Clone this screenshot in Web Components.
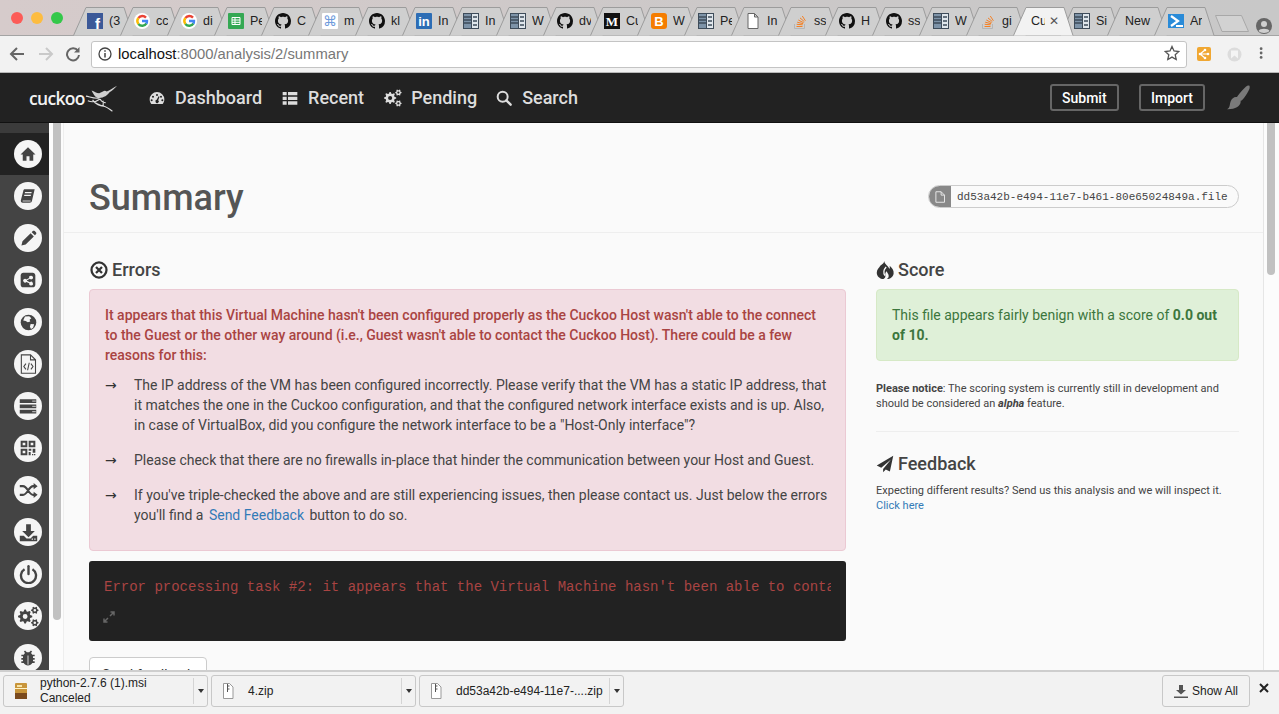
<!DOCTYPE html>
<html>
<head>
<meta charset="utf-8">
<title>Cuckoo</title>
<style>
  html, body { margin: 0; height: 100%; overflow: hidden; }
  body { display: flex; flex-direction: column; height: 714px; font-family: Roboto, "Liberation Sans", sans-serif; background: #fafafa; }
</style>
</head>
<body>
  <browser-tabs></browser-tabs>
  <browser-toolbar></browser-toolbar>
  <cuckoo-nav></cuckoo-nav>
  <page-frame>
    <summary-header></summary-header>
    <errors-panel slot="main"></errors-panel>
    <score-panel slot="side"></score-panel>
  </page-frame>
  <download-shelf></download-shelf>

<script>
function svg(size, box, body, extra = '') {
  return `<svg width="${size}" height="${size}" viewBox="0 0 ${box} ${box}" ${extra}>${body}</svg>`;
}

function gear(cx, cy, r, n = 8) {
  let d = '';
  const step = Math.PI * 2 / (n * 4);
  for (let i = 0; i < n * 4; i++) {
    const rad = (i % 4 === 0 || i % 4 === 1) ? r : r * 0.74;
    const a = i * step - step / 2;
    d += (i ? 'L' : 'M') + (cx + rad * Math.cos(a)).toFixed(2) + ' ' + (cy + rad * Math.sin(a)).toFixed(2);
  }
  d += 'Z';
  const h = r * 0.34;
  d += `M${cx - h} ${cy}a${h} ${h} 0 1 0 ${h * 2} 0a${h} ${h} 0 1 0 ${-h * 2} 0Z`;
  return `<path fill-rule="evenodd" d="${d}"/>`;
}

const cogs = gear(8.5, 12.5, 8.5) + gear(20, 5, 4.5, 6) + gear(20, 20, 4.5, 6);

const octocat = 'M8 0C3.58 0 0 3.58 0 8c0 3.54 2.29 6.53 5.47 7.59.4.07.55-.17.55-.38 0-.19-.01-.82-.01-1.49-2.01.37-2.53-.49-2.69-.94-.09-.23-.48-.94-.82-1.13-.28-.15-.68-.52-.01-.53.63-.01 1.08.58 1.23.82.72 1.21 1.87.87 2.33.66.07-.52.28-.87.51-1.07-1.78-.2-3.64-.89-3.64-3.95 0-.87.31-1.59.82-2.15-.08-.2-.36-1.02.08-2.12 0 0 .67-.21 2.2.82.64-.18 1.32-.27 2-.27.68 0 1.36.09 2 .27 1.53-1.04 2.2-.82 2.2-.82.44 1.1.16 1.92.08 2.12.51.56.82 1.27.82 2.15 0 3.07-1.87 3.75-3.65 3.95.29.25.54.73.54 1.48 0 1.07-.01 1.93-.01 2.2 0 .21.15.46.55.38A8.013 8.013 0 0016 8c0-4.42-3.58-8-8-8z';

const favicons = {
  fb: `<rect width="16" height="16" fill="#3b5998"/><text x="8" y="15.5" font-size="15" font-weight="700" fill="#fff" font-family="Liberation Sans">f</text>`,
  google: `<circle cx="8" cy="8" r="8" fill="#fff"/><g fill="none" stroke-width="2.4"><path d="M12 4.6A5 5 0 0 0 4.4 5" stroke="#ea4335"/><path d="M4.4 5a5 5 0 0 0 0 6" stroke="#fbbc05"/><path d="M4.4 11a5 5 0 0 0 8.1-.6" stroke="#34a853"/><path d="M8 8h5a5 5 0 0 1-.6 2.6" stroke="#4285f4"/></g>`,
  sheets: `<rect width="16" height="16" rx="1" fill="#34a853"/><path d="M4 4.5h8v7H4zM4 7h8M4 9.3h8M7 4.5v7" fill="none" stroke="#fff" stroke-width="1"/>`,
  github: `<path d="${octocat}" fill="#111"/>`,
  cmd: `<rect width="16" height="16" rx="1" fill="#fff"/><text x="8" y="13" font-size="14" text-anchor="middle" fill="#6f9bdc" font-family="DejaVu Sans">⌘</text>`,
  linkedin: `<rect width="16" height="16" rx="1" fill="#2d6db5"/><text x="8" y="13" font-size="13" font-weight="700" text-anchor="middle" fill="#fff" font-family="Liberation Sans">in</text>`,
  panel: `<rect x=".5" y=".5" width="15" height="15" fill="#7d93a8" stroke="#3e4c5a"/><path d="M9 1h6v14H9z" fill="#dfe6ec"/><path d="M1 4h7M1 7h7M1 10h7M10 4h4M10 8h4M10 12h4" stroke="#3e4c5a" stroke-width="1.3"/><path d="M8.5 1v14" stroke="#3e4c5a"/>`,
  medium: `<rect width="16" height="16" fill="#111"/><text x="8" y="13" font-size="13" font-weight="700" text-anchor="middle" fill="#fff" font-family="Liberation Serif">M</text>`,
  blogger: `<rect width="16" height="16" rx="3" fill="#f57d00"/><text x="8" y="13" font-size="13" font-weight="700" text-anchor="middle" fill="#fff" font-family="Liberation Sans">B</text>`,
  doc: `<path d="M3 .5h6.5L13 4v11.5H3z M9.5 .5V4H13" fill="#fff" stroke="#666"/>`,
  stack: `<path d="M2.5 11v4.5h10V11" fill="none" stroke="#b5b5b5" stroke-width="1"/><path d="M4.5 13.5h6M4.7 11.3l6 .5M5.2 9.2l5.9 1.5M6.3 7l5.3 2.700M8 4.900l4.300 3.700M10.300 3l3.100 4.800" stroke="#f48024" stroke-width="1" fill="none"/>`,
  azure: `<path d="M0 1h16v14H0z" fill="#2a8bd8"/><path d="M3 3l7 5-7 5M8 13h7" fill="none" stroke="#fff" stroke-width="2.2"/>`
};

const railIcons = {
  home: svg(18, 24, `<path d="M10 21v-6h4v6h5v-8.5h3L12 3 2 12.5h3V21z"/>`),
  book: svg(16, 24, `<path d="M7 2h15l-4 17c-.3 1.5-1.5 3-3.5 3H4c-2 0-3-1.5-2.7-3.5L5 4c.2-1 1-2 2-2zm.5 4l-.4 2h10l.4-2zm-1 4l-.4 2h10l.4-2z" fill-rule="evenodd"/><path d="M4 19.5h12" stroke="#f5f5f5" stroke-width="1.2"/>`),
  pencil: svg(17, 24, `<path d="M2 22l1.5-6L15 4.5l4.5 4.5L8 20.5zM16.5 3L18 1.5c.8-.8 2-.8 2.8 0l1.7 1.7c.8.8.8 2 0 2.8L21 7.5z"/>`),
  share: svg(16, 24, `<path fill-rule="evenodd" d="M5 1h14c2.2 0 4 1.8 4 4v14c0 2.2-1.800 4-4 4H5c-2.2 0-4-1.8-4-4V5c0-2.2 1.8-4 4-4zm11.5 4.5a2.8 2.8 0 0 0-2.7 3.5l-4.2 2.1a2.8 2.8 0 1 0 0 3.8l4.2 2.1a2.8 2.8 0 1 0 1-1.7l-4.3-2.2a3 3 0 0 0 0-.6l4.3-2.2a2.8 2.8 0 1 0 1.7-4.8z"/>`),
  globe: svg(17, 24, `<circle cx="12" cy="12" r="11"/><path d="M7 3.5l6-.5 3 3-2.5 2 1 2.5-3.5 1-3-1.5-3.5-1zM15 14l5 .5-1.5 5-3 1.5-1.5-3z" fill="#f5f5f5"/>`),
  file: svg(20, 24, `<path d="M4 1h11l6 6v16H4z M15 1v6h6" fill="none" stroke="#444" stroke-width="1.3"/><path d="M9.5 11.5L7 15l2.5 3.5M15.5 11.5L18 15l-2.5 3.5M13.5 10.5l-2 9" fill="none" stroke="#444" stroke-width="1.3"/>`),
  server: svg(18, 24, `<path fill-rule="evenodd" d="M1 3h22v5H1zm17 1.7v1.6h1.5V4.7zm2.5 0v1.6H22V4.7zM1 10h22v5H1zm17 1.7v1.6h1.5v-1.6zm2.5 0v1.6H22v-1.6zM1 17h22v5H1zm17 1.7v1.6h1.5v-1.6zm2.5 0v1.6H22v-1.6z"/>`),
  qr: svg(16, 24, `<path fill-rule="evenodd" d="M1 1h10v10H1zm3 3v4h4V4zM13 1h10v10H13zm3 3v4h4V4zM1 13h10v10H1zm3 3v4h4v-4zM13 13h4v3h-4zM19 13h4v6h-4zM13 18h3v5h-3zM18 21h2v2h-2zM21 21h2v2h-2z"/>`),
  shuffle: svg(19, 24, `<path d="M1 6.5h4c6 0 7 11 13 11h1M1 17.5h4c6 0 7-11 13-11h1" fill="none" stroke="#444" stroke-width="2.6"/><path d="M18.5 2.5l5 4-5 4zM18.5 13.5l5 4-5 4z"/>`),
  download: svg(19, 24, `<path fill-rule="evenodd" d="M9 1.5h6V10h5l-8 8-8-8h5zM1 16h5l3.5 3.5h5L18 16h5v7H1zm15 3.7v1.6h1.6v-1.6zm3.3 0v1.6h1.6v-1.6z"/>`),
  power: svg(19, 24, `<path d="M7 5.3a9.5 9.5 0 1 0 10 0" fill="none" stroke="#444" stroke-width="3"/><path d="M12 1.5v10" stroke="#444" stroke-width="3" stroke-linecap="round"/>`),
  cogs: svg(21, 25, cogs),
  bug: svg(20, 24, `<path d="M20 8h-2.810c-.45-.78-1.070-1.450-1.820-1.960L17 4.410 15.590 3l-2.170 2.170C12.960 5.060 12.490 5 12 5c-.49 0-.96.06-1.410.17L8.410 3 7 4.410l1.620 1.630C7.880 6.550 7.260 7.220 6.810 8H4v2h2.090c-.05.33-.09.66-.09 1v1H4v2h2v1c0 .34.04.67.09 1H4v2h2.810c1.040 1.790 2.970 3 5.190 3s4.150-1.210 5.190-3H20v-2h-2.090c.05-.33.09-.66.09-1v-1h2v-2h-2v-1c0-.34-.04-.67-.09-1H20V8z"/><path d="M12 9v11" stroke="#f5f5f5"/>`)
};

const TAB_LIST = [
  ['fb', '(3'], ['google', 'cc'], ['google', 'di'], ['sheets', 'Pe'], ['github', 'C'], ['cmd', 'm'],
  ['github', 'kl'], ['linkedin', 'In'], ['panel', 'In'], ['panel', 'W'], ['github', 'dv'], ['medium', 'Cu'],
  ['blogger', 'W'], ['panel', 'Pe'], ['doc', 'In'], ['stack', 'ss'], ['github', 'H'], ['github', 'ss'],
  ['panel', 'W'], ['stack', 'gi'], [null, 'Cu', true], ['panel', 'Si'], [null, 'New'], ['azure', 'Ar']
];

class BrowserTabs extends HTMLElement {
  constructor() {
    super();
    this.shadowDOM = this.attachShadow({mode: 'open'});
  }

  connectedCallback() {
    const tabs = TAB_LIST.map(([icon, title, active]) => `
      <div class="tab ${active ? 'active' : ''} ${icon ? '' : 'plain'}">
        <svg class="shape" width="61" height="29" viewBox="0 0 61 29"><path d="M.5 28.5L13 .5h38l9 28" /></svg>
        ${icon ? svg(16, 16, favicons[icon], 'class="fav"') : ''}
        <span class="title">${title}</span>
        ${active ? '<span class="close">✕</span>' : ''}
      </div>`).join('');

    this.shadowDOM.innerHTML = `
      <style>
        :host { display: flex; height: 36px; flex: none; box-sizing: border-box; padding-top: 7px;
          background: linear-gradient(90deg, #d6cbcb, #cbc8c8 60%, #c8c8c8); border-bottom: 1px solid #a4a4a4;
          font: 12.5px "Liberation Sans", sans-serif; color: #222; }
        .lights { width: 78px; flex: none; display: flex; gap: 8px; padding: 5px 0 0 11px; box-sizing: border-box; }
        .lights i { width: 12px; height: 12px; border-radius: 50%; }
        .tab { position: relative; width: 47px; height: 28px; flex: none; display: flex; align-items: center;
          padding-left: 9px; box-sizing: border-box; }
        .shape { position: absolute; left: -5px; top: 0; }
        .shape path { fill: #cfcfcf; stroke: #9c9c9c; }
        .active { z-index: 2; }
        .active .shape path { fill: #f2f2f2; }
        .fav, .title, .close { position: relative; flex: none; }
        .title { margin-left: 6px; width: 12px; overflow: hidden; white-space: nowrap; }
        .plain { padding-left: 13px; }
        .plain .title { margin-left: 0; width: 26px; }
        .active .title { width: 14px; }
        .close { font-size: 12px; color: #555; margin-left: 4px; }
        .new-tab { margin: 8px 0 0 9px; flex: none; }
        .profile { margin: 10px 0 0 7px; flex: none; }
      </style>
      <div class="lights"><i style="background:#fc5b57"></i><i style="background:#fdbc40"></i><i style="background:#34c84a"></i></div>
      ${tabs}
      <svg class="new-tab" width="34" height="17" viewBox="0 0 34 17"><path d="M.5 .5h26l7 16H7z" fill="#d2d2d2" stroke="#a8a8a8"/></svg>
      <svg class="profile" width="16" height="18" viewBox="0 0 16 18"><circle cx="8" cy="9" r="8" fill="#666"/><circle cx="8" cy="7" r="3" fill="#cfcfcf"/><path d="M2.5 14c1-3 10-3 11 0-2 2.5-9 2.5-11 0z" fill="#cfcfcf"/></svg>
    `;
  }
}

class BrowserToolbar extends HTMLElement {
  constructor() {
    super();
    this.shadowDOM = this.attachShadow({mode: 'open'});
  }

  connectedCallback() {
    this.shadowDOM.innerHTML = `
      <style>
        :host { display: flex; align-items: center; height: 37px; flex: none; box-sizing: border-box;
          background: #f2f2f2; border-bottom: 1px solid #b8b8b8; padding: 0 0 0 2px; }
        .btn { width: 30px; flex: none; display: flex; justify-content: center; }
        .back { width: 29px; }
        .reload { width: 24px; }
        .url { flex: none; width: 1096px; height: 27px; margin-left: 6px; box-sizing: border-box; background: #fff;
          border: 1px solid #c4c4c4; border-radius: 3px; display: flex; align-items: center; padding-left: 6px;
          font: 14.8px "Liberation Sans", sans-serif; color: #777; }
        .url b { font-weight: 400; color: #111; }
        .url svg { margin-right: 6px; }
        .star { margin-left: auto; }
        .ext { margin-left: 10px; display: flex; align-items: center; gap: 16px; }
        .kebab { margin-left: 13px; }
      </style>
      <div class="btn back">${svg(16, 16, '<path d="M15 8H2M8 2L2 8l6 6" fill="none" stroke="#666" stroke-width="2"/>')}</div>
      <div class="btn">${svg(16, 16, '<path d="M1 8h13M8 2l6 6-6 6" fill="none" stroke="#c9c9c9" stroke-width="2"/>')}</div>
      <div class="btn reload">${svg(16, 16, '<path d="M13 5a6 6 0 1 0 1 4" fill="none" stroke="#666" stroke-width="2"/><path d="M14.5 1v5.500H9z" fill="#666"/>')}</div>
      <div class="url">
        ${svg(14, 14, '<circle cx="7" cy="7" r="6" fill="none" stroke="#444" stroke-width="1.3"/><path d="M7 6v4.5M7 3.3v1.5" stroke="#444" stroke-width="1.5"/>')}
        <span><b>localhost</b>:8000/analysis/2/summary</span>
        <span class="star">${svg(16, 16, '<path d="M8 1.5l2 4.5 4.8.5-3.6 3.2 1 4.8L8 12.1l-4.2 2.4 1-4.8L1.2 6.5 6 6z" fill="none" stroke="#555" stroke-width="1.3"/>')}</span>
      </div>
      <div class="ext">
        ${svg(14, 14, '<rect width="14" height="14" rx="2" fill="#f0a732"/><path d="M3 7l5-4M3 7l5 4M3 7h8" stroke="#fff" stroke-width="1.2"/><circle cx="3" cy="7" r="1.3" fill="#fff"/><circle cx="8" cy="3" r="1.3" fill="#fff"/><circle cx="8" cy="11" r="1.3" fill="#fff"/><circle cx="11" cy="7" r="1.3" fill="#fff"/>')}
        ${svg(15, 15, '<circle cx="7.5" cy="7.5" r="7" fill="#dcdcdc"/><path d="M4 3.5h7v8l-3.5-3-3.5 3z" fill="#f4f4f4"/>')}
      </div>
      <div class="kebab">${svg(14, 16, '<circle cx="7" cy="3" r="1.6" fill="#666"/><circle cx="7" cy="8" r="1.6" fill="#666"/><circle cx="7" cy="13" r="1.6" fill="#666"/>')}</div>
    `;
  }
}

class NavItem extends HTMLElement {
  constructor() {
    super();
    this.shadowDOM = this.attachShadow({mode: 'open'});
    this.shadowDOM.innerHTML = `
      <style>
        :host { display: flex; align-items: center; gap: 10px; color: #ddd; fill: #ddd;
          font: 500 18px Roboto, sans-serif; margin-right: 20px; }
        ::slotted(svg) { display: block; flex: none; }
      </style>
      <slot name="icon"></slot><slot></slot>
    `;
  }
}

class CuckooNav extends HTMLElement {
  constructor() {
    super();
    this.shadowDOM = this.attachShadow({mode: 'open'});
  }

  connectedCallback() {
    const icon = (box, body) => svg(16, box, body, 'slot="icon"');
    this.shadowDOM.innerHTML = `
      <style>
        :host { display: flex; align-items: center; height: 50px; flex: none; box-sizing: border-box;
          background: #222; border-bottom: 1px solid #111; padding: 0 29px; }
        .logo { width: 120px; flex: none; display: flex; align-items: center; color: #f2f2f2;
          font: 600 17.5px "Open Sans", sans-serif; letter-spacing: -.7px; }
        .logo svg { margin-left: 0; }
        .btn { box-sizing: border-box; height: 27px; display: flex; align-items: center; padding: 0 10px;
          border: 2px solid #666; border-radius: 3px; color: #fff; font: 500 14px Roboto, sans-serif; }
        .right { margin-left: auto; display: flex; align-items: center; gap: 20px; }
        .pending { margin-right: 19px; }
        .submit { padding: 0 10.5px; }
      </style>
      <div class="logo"><span>cuckoo</span>
        <svg width="34" height="30" viewBox="0 0 36 30" fill="none" stroke="#ddd"><path d="M7 7c3 1 5 3 8 3l4-2c1-1 3-1 4 0 3-1 7-4 11-6-3 3-5 5-8 7-2 3-6 6-11 6-4 0-6-4-8-8z" fill="#cfcfcf" stroke="none"/><path d="M1 13c5 1 9 3 14 2M3 18c5 2 9 1 13-2M8 17c3 5 8 6 13 7 3 1 5 3 8 5M19 24c0-2 1-4 0-6M16 16c1 2 3 4 6 4" stroke-width="1.2"/></svg>
      </div>
      <nav-item>${icon(24, '<path fill-rule="evenodd" d="M12 3a11 11 0 0 0-11 11c0 3 1 5 2.5 7h17c1.5-2 2.5-4 2.5-7A11 11 0 0 0 12 3zm0 3a1.5 1.5 0 1 1 0 3 1.5 1.5 0 0 1 0-3zM6 8.5a1.5 1.5 0 1 1 0 3 1.5 1.5 0 0 1 0-3zm12 0a1.5 1.5 0 1 1 0 3 1.5 1.5 0 0 1 0-3zM4 14a1.5 1.5 0 1 1 0 3 1.5 1.5 0 0 1 0-3zm16 0a1.5 1.5 0 1 1 0 3 1.5 1.5 0 0 1 0-3zm-5.5-4.5l1.3.7-2 5a2.5 2.5 0 1 1-2.3-.5z"/>')}Dashboard</nav-item>
      <nav-item>${icon(24, '<path d="M1 3h6v5H1zM9 3h14v5H9zM1 10h6v5H1zM9 10h14v5H9zM1 17h6v5H1zM9 17h14v5H9z"/>')}Recent</nav-item>
      <nav-item class="pending">${svg(18, 25, cogs, 'slot="icon" style="margin-right:-1px"')}Pending</nav-item>
      <nav-item>${icon(24, '<circle cx="10" cy="10" r="7.5" fill="none" stroke="#ddd" stroke-width="3"/><path d="M15.5 15.5L22 22" stroke="#ddd" stroke-width="3.5" stroke-linecap="round"/>')}Search</nav-item>
      <div class="right">
        <div class="btn submit">Submit</div>
        <div class="btn">Import</div>
        ${svg(25, 24, '<path d="M23.5 .8c.6 2-.2 3.4-1 5-1.8 3.2-3.5 6-6 8.7-1.2 1.2-3 1.3-4.2.1s-1.2-2.8-.2-4.1C14.5 7.5 17.5 4 20 1.7c1.2-1 2.600-1.5 3.5-.9zM10.5 11.5c2.5 0 5 2.2 4.5 5-.6 4-5.5 7-13 6.700 3.200-1.500 2.200-4.700 3.500-7.700.8-2.300 3-4 5-4z" fill="#7a7a7a"/>')}
      </div>
    `;
  }
}

class SideRail extends HTMLElement {
  constructor() {
    super();
    this.shadowDOM = this.attachShadow({mode: 'open'});
  }

  connectedCallback() {
    const names = ['home', 'book', 'pencil', 'share', 'globe', 'file', 'server', 'qr', 'shuffle', 'download', 'power', 'cogs', 'bug'];
    const items = names.map((n, i) => `<div class="item ${i === 0 ? 'active' : ''}"><span class="dot">${railIcons[n]}</span></div>`).join('');
    this.shadowDOM.innerHTML = `
      <style>
        :host { display: block; width: 49px; flex: none; overflow: hidden; background: #444; border-top: 10px solid #3b3b3b; box-sizing: border-box; }
        .item { height: 42px; display: flex; align-items: center; justify-content: flex-end; padding-right: 7px; }
        .active { background: #222; }
        .dot { width: 28px; height: 28px; border-radius: 50%; background: #f5f5f5; fill: #444;
          display: flex; align-items: center; justify-content: center; }
        svg { display: block; }
      </style>
      ${items}
    `;
  }
}

class ScrollGutter extends HTMLElement {
  constructor() {
    super();
    this.shadowDOM = this.attachShadow({mode: 'open'});
    this.shadowDOM.innerHTML = `
      <style>
        :host { display: block; flex: none; box-sizing: border-box; background: #fcfcfc; }
        .thumb { width: 8px; height: var(--thumb, 100px); background: #c1c1c1; border-radius: 0 0 4px 4px; }
      </style>
      <div class="thumb"></div>
    `;
  }
}

class PageFrame extends HTMLElement {
  constructor() {
    super();
    this.shadowDOM = this.attachShadow({mode: 'open'});
    this.shadowDOM.innerHTML = `
      <style>
        :host { display: flex; flex: 1; min-height: 0; overflow: hidden; background: #fafafa; }
        .content { width: 1201px; flex: none; box-sizing: border-box; border-left: 1px solid #eee; border-right: 1px solid #e6e6e6; overflow: hidden; }
        .columns { display: grid; grid-template-columns: 757px 363px; gap: 30px; padding: 0 25px; }
        .left-bar { width: 14px; padding-left: 4px; --thumb: 497px; }
        .right-bar { flex: 1; padding-left: 3px; --thumb: 152px; }
      </style>
      <side-rail></side-rail>
      <scroll-gutter class="left-bar"></scroll-gutter>
      <div class="content">
        <slot></slot>
        <div class="columns">
          <div><slot name="main"></slot></div>
          <div><slot name="side"></slot></div>
        </div>
      </div>
      <scroll-gutter class="right-bar"></scroll-gutter>
    `;
  }
}

class SummaryHeader extends HTMLElement {
  constructor() {
    super();
    this.shadowDOM = this.attachShadow({mode: 'open'});
    this.shadowDOM.innerHTML = `
      <style>
        :host { display: flex; justify-content: space-between; align-items: center; height: 110px; box-sizing: border-box;
          padding: 41px 24px 0 25px; border-bottom: 1px solid #eee; }
        h1 { margin: 0; font: 500 36px/48px Roboto, sans-serif; color: #555; }
        .badge { display: flex; align-items: center; height: 23px; box-sizing: border-box; margin-top: -3px; width: 311px;
          border: 1px solid #ccc; border-radius: 12px; overflow: hidden; background: #fafafa;
          font: 11px "Liberation Mono", monospace; color: #444; }
        .badge span { width: 22px; height: 100%; background: #888; display: flex; align-items: center; justify-content: center; margin-right: 6px; flex: none; }
      </style>
      <h1>Summary</h1>
      <div class="badge"><span>${svg(12, 16, '<path d="M2.5 1h7L14 5.5V15H2.5zM9.5 1v4.5H14" fill="none" stroke="#eee" stroke-width="1.2"/>')}</span>dd53a42b-e494-11e7-b461-80e65024849a.file</div>
    `;
  }
}

class SectionHeading extends HTMLElement {
  constructor() {
    super();
    this.shadowDOM = this.attachShadow({mode: 'open'});
    this.shadowDOM.innerHTML = `
      <style>
        :host { display: flex; align-items: center; gap: 4px; height: 20px; color: #444; fill: #333;
          font: 500 18px/20px Roboto, sans-serif; }
        ::slotted(svg) { display: block; flex: none; }
      </style>
      <slot name="icon"></slot><slot></slot>
    `;
  }
}

class StatusBox extends HTMLElement {
  constructor() {
    super();
    this.shadowDOM = this.attachShadow({mode: 'open'});
    this.shadowDOM.innerHTML = `
      <style>
        :host { display: block; box-sizing: border-box; padding: 15px; border-radius: 4px; border: 1px solid;
          font: 14px/20px Roboto, sans-serif; }
        :host([kind=danger]) { background: #f2dde3; border-color: #ebc9d3; color: #a94442; font-weight: 500; }
        :host([kind=success]) { background: #dff0d8; border-color: #d6e9c6; color: #3c763d; }
      </style>
      <slot></slot>
    `;
  }
}

class ArrowItem extends HTMLElement {
  constructor() {
    super();
    this.shadowDOM = this.attachShadow({mode: 'open'});
    this.shadowDOM.innerHTML = `
      <style>
        :host { display: flex; margin-top: 15px; color: #444; font: 400 14px/20px Roboto, sans-serif; }
        :host([first]) { margin-top: 10px; }
        .arrow { width: 29px; flex: none; font-family: "DejaVu Sans", sans-serif; color: #333; }
      </style>
      <span class="arrow">→</span><div><slot></slot></div>
    `;
  }
}

class ErrorsPanel extends HTMLElement {
  constructor() {
    super();
    this.shadowDOM = this.attachShadow({mode: 'open'});
    this.shadowDOM.innerHTML = `
      <style>
        :host { display: block; padding-top: 27px; }
        status-box { margin-top: 9px; padding-bottom: 25px; }
        section-heading svg { margin-left: 1px; }
        a { color: #337ab7; padding: 0 2px; }
        pre { margin: 10px 0 0; height: 80px; box-sizing: border-box; background: #222; border-radius: 3px; padding: 17px 15px 0;
          font: 14px/18px "Liberation Mono", monospace; color: #a94442; overflow: hidden; white-space: nowrap; }
        pre svg { display: block; margin-top: 15px; margin-left: -1px; }
        button { display: block; margin-top: 16px; width: 118px; height: 36px; background: #fff; border: 1px solid #ccc; border-radius: 4px;
          font: 14px Roboto, sans-serif; color: #333; padding: 0; }
        .clip { overflow: hidden; }
      </style>
      <section-heading>${svg(18, 24, '<circle cx="12" cy="12" r="10" fill="none" stroke="#333" stroke-width="3"/><path d="M8 8l8 8M16 8l-8 8" stroke="#333" stroke-width="3"/>', 'slot="icon"')}Errors</section-heading>
      <status-box kind="danger">
        It appears that this Virtual Machine hasn't been configured properly as the Cuckoo Host wasn't able to the connect to the Guest or the other way around (i.e., Guest wasn't able to contact the Cuckoo Host). There could be a few reasons for this:
        <arrow-item first>The IP address of the VM has been configured incorrectly. Please verify that the VM has a static IP address, that it matches the one in the Cuckoo configuration, and that the configured network interface exists and is up. Also, in case of VirtualBox, did you configure the network interface to be a "Host-Only interface"?</arrow-item>
        <arrow-item>Please check that there are no firewalls in-place that hinder the communication between your Host and Guest.</arrow-item>
        <arrow-item>If you've triple-checked the above and are still experiencing issues, then please contact us. Just below the errors you'll find a <a>Send Feedback</a> button to do so.</arrow-item>
      </status-box>
      <pre><div class="clip">Error processing task #2: it appears that the Virtual Machine hasn't been able to contact the Cuckoo Host.</div>${svg(12, 12, '<path d="M1 11l4-4M7 5l4-4M7.5 1H11v3.5M1 7.5V11h3.5" fill="none" stroke="#666" stroke-width="1.5"/>')}</pre>
      <button>Send feedback</button>
    `;
  }
}

class ScorePanel extends HTMLElement {
  constructor() {
    super();
    this.shadowDOM = this.attachShadow({mode: 'open'});
    this.shadowDOM.innerHTML = `
      <style>
        :host { display: block; padding-top: 27px; }
        status-box { margin-top: 9px; }
        b { font-weight: 700; }
        p { margin: 0; font: 11px/15px Roboto, sans-serif; color: #444; }
        .notice { margin-top: 20px; }
        hr { border: 0; border-top: 1px solid #eee; margin: 20px 0 22px; }
        a { color: #337ab7; }
        .feedback { margin-top: 9px; }
      </style>
      <section-heading>${svg(18, 24, '<path d="M11 0c.5 4.5 5 6 7 10.5.6-1.300.6-2.800.2-4.300C21.5 9 24 12.500 23.500 16.500 23 21 19 24 14.500 24c1.800-1 2.800-3 2.300-5-.5-2.100-2-3.200-2.500-5.200-1.500 1.500-2.300 3-1.800 5.200.4 2-.5 4-2.500 5C5.500 24 1 20.500 1 15.500c0-4 3-6.500 5-9.500 2.500-1.500 5-3.500 5-6z"/><path d="M13.500 8c-3.500 4-3.500 8.500-1.500 11.500" fill="none" stroke="#fafafa" stroke-width="1.800"/>', 'slot="icon"')}Score</section-heading>
      <status-box kind="success">This file appears fairly benign with a score of <b>0.0 out of 10.</b></status-box>
      <p class="notice"><b>Please notice</b>: The scoring system is currently still in development and should be considered an <b><i>alpha</i></b> feature.</p>
      <hr>
      <section-heading>${svg(18, 24, '<path d="M23 1L1 14l6 3L20 6 9.5 18.5V23l3.5-3.7 5.5 2.700z"/>', 'slot="icon"')}Feedback</section-heading>
      <p class="feedback">Expecting different results? Send us this analysis and we will inspect it.<br><a>Click here</a></p>
    `;
  }
}

class ShelfItem extends HTMLElement {
  constructor() {
    super();
    this.shadowDOM = this.attachShadow({mode: 'open'});
    this.shadowDOM.innerHTML = `
      <style>
        :host { display: flex; width: 205px; height: 32px; flex: none; box-sizing: border-box; border: 1px solid #c8c8c8; border-radius: 3px; background: #f2f2f2; }
        .body { flex: 1; display: flex; align-items: center; min-width: 0; padding-left: 10px; }
        .text { margin-left: 10px; line-height: 15px; white-space: nowrap; }
        .arrow { width: 13px; flex: none; margin: 2px 0; border-left: 1px solid #d4d4d4; display: flex; align-items: center; justify-content: center; }
        .arrow i { border: 3px solid transparent; border-top: 4px solid #333; margin-top: 3px; }
        ::slotted(svg) { display: block; flex: none; }
      </style>
      <div class="body"><slot name="icon"></slot><div class="text"><slot></slot></div></div>
      <div class="arrow"><i></i></div>
    `;
  }
}

class DownloadShelf extends HTMLElement {
  constructor() {
    super();
    this.shadowDOM = this.attachShadow({mode: 'open'});
  }

  connectedCallback() {
    const docIcon = '<path d="M1.5 .5h6L11 4v11.5H1.5z" fill="#fff" stroke="#999"/><path d="M5.5 1v8M5.5 3h2M5.5 6h2" stroke="#555"/>';
    const msiIcon = '<rect x="1" y="0" width="12" height="16" rx="1" fill="#c8953b"/><rect x="1" y="10" width="12" height="6" fill="#7a4a1e"/><rect x="1" y="5" width="12" height="1" fill="#fff3c8"/><rect x="3" y="2" width="5" height="2" fill="#f7e4a6"/>';
    this.shadowDOM.innerHTML = `
      <style>
        :host { display: flex; height: 44px; flex: none; box-sizing: border-box; margin-top: -1px; position: relative;
          background: #f2f2f2; border-top: 2px solid #cecece; padding: 3px 0 0 3px; gap: 3px;
          font: 12px "Liberation Sans", sans-serif; color: #222; }
        .spacer { flex: 1; }
        .show { width: 88px; height: 32px; box-sizing: border-box; border: 1px solid #c8c8c8; border-radius: 3px; display: flex;
          align-items: center; justify-content: center; gap: 4px; flex: none; }
        .x { width: 26px; flex: none; display: flex; padding: 8px 0 0 6px; box-sizing: border-box; height: 32px; }
      </style>
      <shelf-item>${svg(16, 16, msiIcon, 'slot="icon"')}<div>python-2.7.6 (1).msi<br>Canceled</div></shelf-item>
      <shelf-item>${svg(16, 16, docIcon, 'slot="icon"')}<div>4.zip</div></shelf-item>
      <shelf-item>${svg(16, 16, docIcon, 'slot="icon"')}<div>dd53a42b-e494-11e7-....zip</div></shelf-item>
      <div class="spacer"></div>
      <div class="show">${svg(14, 14, '<path d="M5 1h4v5h3L7 10.5 2 6h3zM0 12.5h14V14H0z" fill="#555"/>')}Show All</div>
      <div class="x">${svg(10, 10, '<path d="M1 1l8 8M9 1L1 9" stroke="#222" stroke-width="2"/>')}</div>
    `;
  }
}

customElements.define('browser-tabs', BrowserTabs);
customElements.define('browser-toolbar', BrowserToolbar);
customElements.define('nav-item', NavItem);
customElements.define('cuckoo-nav', CuckooNav);
customElements.define('side-rail', SideRail);
customElements.define('scroll-gutter', ScrollGutter);
customElements.define('page-frame', PageFrame);
customElements.define('summary-header', SummaryHeader);
customElements.define('section-heading', SectionHeading);
customElements.define('status-box', StatusBox);
customElements.define('arrow-item', ArrowItem);
customElements.define('errors-panel', ErrorsPanel);
customElements.define('score-panel', ScorePanel);
customElements.define('shelf-item', ShelfItem);
customElements.define('download-shelf', DownloadShelf);
</script>
</body>
</html>
